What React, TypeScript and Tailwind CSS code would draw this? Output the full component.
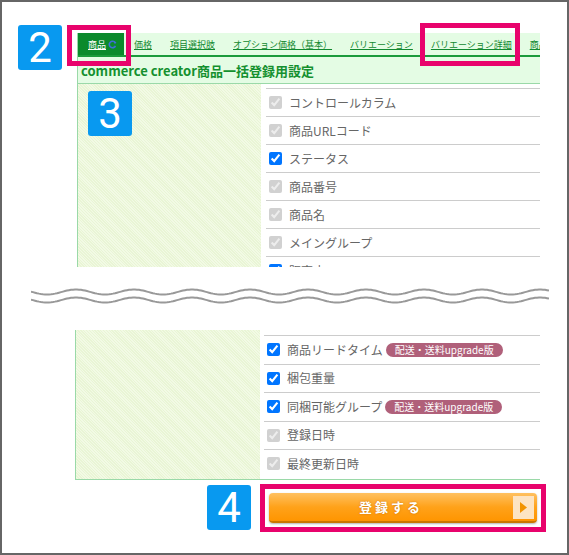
import React from 'react';

const tabs = ['価格', '項目選択肢', 'オプション価格（基本）', 'バリエーション', 'バリエーション詳細', '商品リードタイム'];

type Row = { label: string; state: 'on' | 'off'; badge?: boolean };

const topRows: Row[] = [
  { label: 'コントロールカラム', state: 'off' },
  { label: '商品URLコード', state: 'off' },
  { label: 'ステータス', state: 'on' },
  { label: '商品番号', state: 'off' },
  { label: '商品名', state: 'off' },
  { label: 'メイングループ', state: 'off' },
  { label: '販売店', state: 'on' },
];

const bottomRows: Row[] = [
  { label: '商品リードタイム', state: 'on', badge: true },
  { label: '梱包重量', state: 'on' },
  { label: '同梱可能グループ', state: 'on', badge: true },
  { label: '登録日時', state: 'off' },
  { label: '最終更新日時', state: 'off' },
];

function wave(base: number) {
  const pts: string[] = [];
  for (let x = 0; x <= 518; x += 2) {
    const y = base - 2.5 * Math.cos((2 * Math.PI * (x - 45)) / 58);
    pts.push(`${x},${y.toFixed(2)}`);
  }
  return pts.join(' ');
}

function NumBadge({ n }: { n: string }) {
  return (
    <div className="w-[44px] h-[45px] shrink-0 rounded-[3px] bg-[#0899f0] flex items-center justify-center text-white text-[42px] leading-none font-['Roboto',sans-serif]">
      {n}
    </div>
  );
}

function Pill() {
  return (
    <span className="ml-[3px] h-[14px] px-[9px] rounded-full bg-[#b0607a] text-white text-[10px] leading-[14px] whitespace-nowrap">
      配送・送料upgrade版
    </span>
  );
}

function ListRow({ row, h }: { row: Row; h: string }) {
  return (
    <div className={`${h} border-t border-[#cccccc] flex items-center`}>
      {row.state === 'on' ? (
        <input type="checkbox" checked readOnly className="m-0 ml-[3px] w-[13px] h-[13px]" />
      ) : (
        <input type="checkbox" checked disabled readOnly className="m-0 ml-[3px] w-[13px] h-[13px]" />
      )}
      <span className="ml-[7px] text-[12px] text-[#666] whitespace-nowrap">{row.label}</span>
      {row.badge && <Pill />}
    </div>
  );
}

const hatch =
  'bg-[#eef8dd] bg-[repeating-linear-gradient(45deg,#e9f5d5_0_1px,#f2fae5_1px_2px)]';

export default function App() {
  return (
    <div className="relative w-[569px] h-[555px] bg-white border-2 border-[#666] flex flex-col overflow-hidden font-['Noto_Sans_CJK_JP',sans-serif]">
      {/* top: badge 2 + tab panel */}
      <div className="flex items-start pl-[16px] pt-[23px]">
        <NumBadge n="2" />
        <div className="ml-[15px] mt-[8px] w-[463px] h-[234px] shrink-0 border-l border-[#9ad9a8] overflow-hidden flex flex-col">
          <div className="h-[24px] shrink-0 bg-[#e4fce4] border-b-2 border-[#1b9a3b] flex items-stretch">
            <div className="w-[46px] shrink-0 bg-[#0b8a2c] flex items-center pl-[10px] pt-[1px]">
              <span className="text-[9px] text-white underline whitespace-nowrap">商品</span>
              <svg width="9" height="9" viewBox="0 0 10 10" className="ml-[2px] shrink-0">
                <path d="M8 3 A3.6 3.6 0 1 0 8.3 6.5" fill="none" stroke="#3f6fd6" strokeWidth="1.8" />
                <path d="M6.2 1.2 L9.4 2.4 L7.6 4.8 Z" fill="#3f6fd6" />
              </svg>
            </div>
            <div className="flex items-center gap-[18px] pl-[10px] pt-[1px]">
              {tabs.map((t) => (
                <span key={t} className="shrink-0 text-[9px] text-[#11882f] underline whitespace-nowrap">
                  {t}
                </span>
              ))}
            </div>
          </div>
          <div className="h-[27px] shrink-0 bg-[#e4fce4] border-b border-[#9ad9a8] flex items-center pl-[3px] pt-[1px]">
            <span className="text-[13px] font-bold text-[#14902f] whitespace-nowrap">
              commerce creator商品一括登録用設定
            </span>
          </div>
          <div className="flex flex-1">
            <div className={`w-[183px] shrink-0 ${hatch} pl-[10px] pt-[7px]`}>
              <NumBadge n="3" />
            </div>
            <div className="flex-1 pl-[5px] pt-[4px]">
              {topRows.map((r) => (
                <ListRow key={r.label} row={r} h="h-[28px]" />
              ))}
            </div>
          </div>
        </div>
      </div>

      {/* break wave */}
      <div className="h-[63px] shrink-0 pl-[29px]">
        <svg width="518" height="63" viewBox="0 0 518 63">
          <polyline points={wave(25)} fill="none" stroke="#999" strokeWidth="2" />
          <polyline points={wave(33)} fill="none" stroke="#999" strokeWidth="2" />
        </svg>
      </div>

      {/* bottom panel */}
      <div className="ml-[73px] w-[465px] h-[150px] shrink-0 border-l border-b border-[#9ad9a8] flex">
        <div className={`w-[184px] shrink-0 ${hatch}`} />
        <div className="flex-1 pl-[4px] pt-[5px]">
          {bottomRows.map((r) => (
            <ListRow key={r.label} row={r} h="h-[28.5px]" />
          ))}
        </div>
      </div>

      {/* submit row */}
      <div className="flex items-start pl-[205px] pt-[4px] gap-[9px]">
        <div className="mt-[1px]">
          <NumBadge n="4" />
        </div>
        <div className="w-[286px] h-[48px] border-[5px] border-[#e8036c] p-[4px]">
          <button className="w-full h-[30px] rounded-[4px] bg-[linear-gradient(#ffc161,#ffa21a_50%,#ff9500)] border-b-2 border-[#c97700] shadow-[0_1px_2px_rgba(0,0,0,0.3)] flex items-center">
            <span className="flex-1 text-center text-white font-bold text-[13px] tracking-[3px] [text-shadow:0_0_2px_rgba(160,80,0,0.6)]">
              登録する
            </span>
            <span className="w-[21px] h-[23px] mr-[3px] bg-[#fde4c2] flex items-center justify-center">
              <svg width="7" height="11" viewBox="0 0 7 11">
                <polygon points="0,0 7,5.5 0,11" fill="#f29400" />
              </svg>
            </span>
          </button>
        </div>
      </div>

      {/* highlight boxes */}
      <div className="absolute left-[65px] top-[23px] w-[64px] h-[41px] border-[5px] border-[#e8036c]" />
      <div className="absolute left-[418px] top-[21px] w-[100px] h-[43px] border-[5px] border-[#e8036c]" />
    </div>
  );
}
